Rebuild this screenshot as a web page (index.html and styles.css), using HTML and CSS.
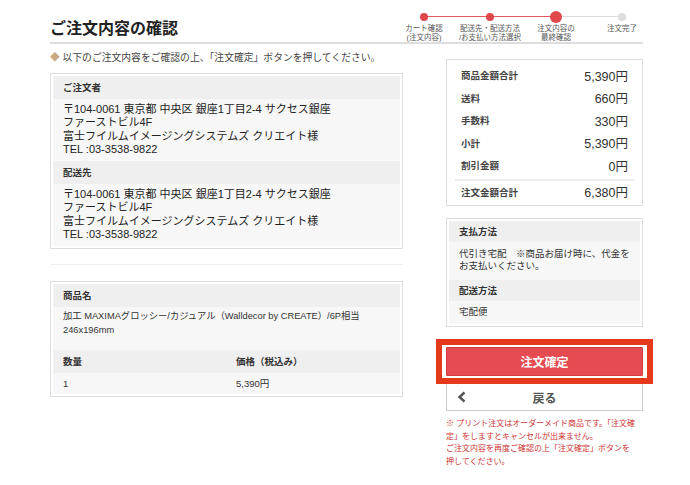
FILE: index.html
```html
<!DOCTYPE html>
<html lang="ja">
<head>
<meta charset="UTF-8">
<meta name="viewport" content="width=device-width, initial-scale=1.0">
<title>ご注文内容の確認</title>
<link rel="stylesheet" href="styles.css">
</head>
<body>

<div class="page">
  <div class="head">
    <h1>ご注文内容の確認</h1>
    <ol class="steps">
      <li class="done"><span class="dot"></span><span class="label">カート確認<br>(注文内容)</span></li>
      <li class="done"><span class="dot"></span><span class="label">配送先・配送方法<br>/お支払い方法選択</span></li>
      <li class="current"><span class="dot"></span><span class="label">注文内容の<br>最終確認</span></li>
      <li><span class="dot"></span><span class="label">注文完了</span></li>
    </ol>
  </div>

  <div class="cols">
    <div class="main">
      <p class="lead"><span class="mark">◆</span> 以下のご注文内容をご確認の上、「注文確定」ボタンを押してください。</p>

      <div class="box">
        <div class="box-h">ご注文者</div>
        <div class="box-b addr">
          〒104-0061 東京都 中央区 銀座1丁目2-4 サクセス銀座<br>
          ファーストビル4F<br>
          富士フイルムイメージングシステムズ クリエイト様<br>
          TEL :03-3538-9822
        </div>
        <div class="box-h">配送先</div>
        <div class="box-b addr">
          〒104-0061 東京都 中央区 銀座1丁目2-4 サクセス銀座<br>
          ファーストビル4F<br>
          富士フイルムイメージングシステムズ クリエイト様<br>
          TEL :03-3538-9822
        </div>
      </div>

      <hr class="sep">

      <div class="box">
        <div class="box-h">商品名</div>
        <div class="box-b item">
          加工 MAXIMAグロッシー/カジュアル（Walldecor by CREATE）/6P相当<br>
          246x196mm
        </div>
        <div class="box-h pair">
          <span>数量</span>
          <span>価格（税込み）</span>
        </div>
        <div class="box-b pair">
          <span>1</span>
          <span>5,390円</span>
        </div>
      </div>
    </div>

    <div class="side">
      <div class="total">
        <div class="row"><span>商品金額合計</span><b>5,390円</b></div>
        <div class="row"><span>送料</span><b>660円</b></div>
        <div class="row"><span>手数料</span><b>330円</b></div>
        <div class="row"><span>小計</span><b>5,390円</b></div>
        <div class="row"><span>割引金額</span><b>0円</b></div>
        <div class="row sum"><span>注文金額合計</span><b>6,380円</b></div>
      </div>

      <div class="box pay">
        <div class="box-h">支払方法</div>
        <div class="box-b">代引き宅配　※商品お届け時に、代金を<br>お支払いください。</div>
        <div class="box-h">配送方法</div>
        <div class="box-b">宅配便</div>
      </div>

      <div class="confirm-wrap">
        <button class="confirm">注文確定</button>
      </div>
      <button class="back">
        <svg width="10" height="12" viewBox="0 0 10 12"><polyline points="7.5,1.5 2.5,6 7.5,10.5" fill="none" stroke="#555" stroke-width="2.4"/></svg>
        <span>戻る</span>
        <span></span>
      </button>

      <div class="notes">
        ※ プリント注文はオーダーメイド商品です。「注文確<br>
        定」をしますとキャンセルが出来ません。<br>
        ご注文内容を再度ご確認の上「注文確定」ボタンを<br>
        押してください。
      </div>
    </div>
  </div>
</div>

</body>
</html>
```

FILE: styles.css
```css
body {
  margin: 0;
  background: #fff;
  color: #333;
  font-family: "Liberation Sans", "Noto Sans CJK JP", sans-serif;
}

.page {
  width: 593px;
  padding-left: 50px;
}

/* header */
.head {
  display: flex;
  height: 42px;
  border-bottom: 2px solid #ddd;
}

.head h1 {
  align-self: flex-end;
  margin: 0;
  padding-bottom: 3px;
  font-size: 16px;
  line-height: 20px;
  font-weight: bold;
  color: #222;
}

.steps {
  display: flex;
  list-style: none;
  margin: 0 -12px 0 auto;
  padding: 0;
}

.steps li {
  position: relative;
  width: 66px;
  display: flex;
  flex-direction: column;
  align-items: center;
}

.steps li:not(:first-child)::before {
  content: "";
  position: absolute;
  top: 16px;
  left: -50%;
  width: 100%;
  height: 1px;
  background: #ddd;
}

.steps li.done + li::before {
  background: #e25a5e;
}

.dot {
  position: relative;
  z-index: 1;
  width: 8px;
  height: 8px;
  margin: 13px 0 2px;
  border-radius: 50%;
  background: #ddd;
}

.done .dot {
  background: #e0474c;
}

.current .dot {
  width: 12px;
  height: 12px;
  margin: 11px 0 0;
  background: #e0474c;
}

.label {
  margin-top: 1px;
  font-size: 7.5px;
  line-height: 9px;
  color: #555;
  text-align: center;
  white-space: nowrap;
}

/* columns */
.cols {
  display: flex;
  gap: 43px;
}

.main {
  width: 353px;
}

.side {
  width: 197px;
  padding-top: 15px;
}

.lead {
  margin: 7px 0 8px;
  font-size: 9.8px;
  line-height: 14px;
  color: #444;
  white-space: nowrap;
}

.mark {
  color: #c9a883;
}

.box {
  border: 1px solid #ddd;
  padding: 2px;
  background: #fff;
}

.box-h {
  padding: 0 10px;
  background: #efefef;
  font-size: 9.5px;
  line-height: 23px;
  font-weight: bold;
  color: #333;
}

.box-b {
  padding: 4px 10px 5px;
  background: #f7f7f7;
  font-size: 9.5px;
  line-height: 13.3px;
}

.box-b.addr {
  font-size: 11px;
  color: #222;
}

.box-b.item {
  padding: 3px 10px 13px;
  font-size: 9.3px;
  line-height: 13.5px;
}

.pair {
  display: grid;
  grid-template-columns: 173px 1fr;
}

.box-b.pair {
  line-height: 21px;
  padding: 0 10px;
}

.sep {
  margin: 15px 0 16px;
  border: 0;
  border-top: 1px solid #eee;
}

/* right side */
.total {
  border: 1px solid #ddd;
  padding: 4px 8px 2px;
}

.row {
  display: flex;
  justify-content: space-between;
  align-items: center;
  height: 22.5px;
  padding: 0 6px;
}

.row span {
  font-size: 9.5px;
  font-weight: bold;
  color: #444;
}

.row b {
  font-size: 12.5px;
  font-weight: normal;
  color: #333;
}

.row.sum {
  margin-top: 2px;
  border-top: 2px solid #eee;
}

.pay {
  margin-top: 12px;
}

.pay .box-h {
  line-height: 21px;
}

.pay .box-b {
  padding: 5.5px 10px 7.5px;
  line-height: 12.5px;
  white-space: nowrap;
}

.pay .box-b:last-child {
  padding: 4.5px 10px 6px;
}

.confirm-wrap {
  margin: 12px -10px 0;
  border: 6px solid #e4391b;
  padding: 2px 4px;
  background: #fff;
}

.confirm {
  display: block;
  width: 100%;
  height: 29px;
  border: 1px solid #d43c41;
  border-radius: 1px;
  background: #e54b50;
  color: #fff;
  font-family: inherit;
  font-size: 12px;
  font-weight: bold;
}

.back {
  display: grid;
  grid-template-columns: 30px 1fr 30px;
  align-items: center;
  justify-items: center;
  width: 100%;
  height: 27px;
  padding: 0;
  border: 1px solid #ccc;
  border-top: 0;
  background: #fff;
  color: #555;
  font-family: inherit;
  font-size: 12px;
  font-weight: bold;
}

.back svg {
  justify-self: start;
  margin-left: 10px;
}

.notes {
  margin-top: 7px;
  font-size: 8px;
  line-height: 12.5px;
  color: #cc3333;
  white-space: nowrap;
}
```
